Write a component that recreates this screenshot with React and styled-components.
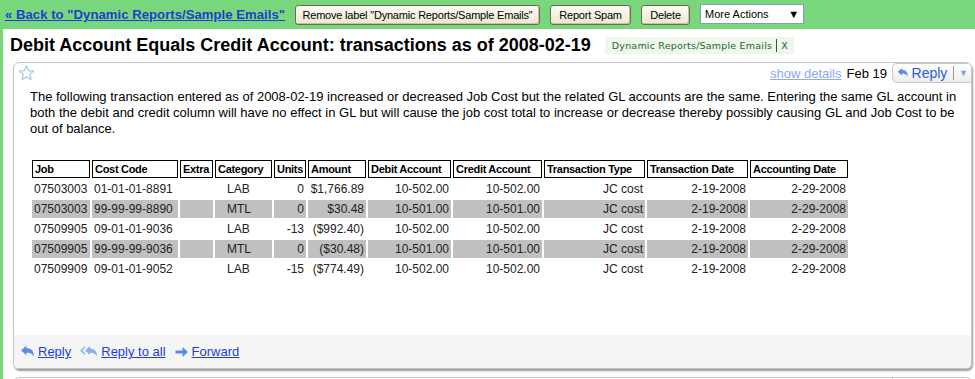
import React from 'react';
import styled, { createGlobalStyle } from 'styled-components';

const GlobalStyle = createGlobalStyle`
  html, body {
    margin: 0;
    padding: 0;
    background: #78d77d;
    font-family: 'Liberation Sans', Arial, sans-serif;
    overflow: hidden;
  }
`;

const Page = styled.div`
  width: 975px;
  height: 379px;
  display: flex;
  flex-direction: column;
`;

const TopBar = styled.div`
  display: flex;
  flex-direction: row;
  align-items: center;
  height: 29px;
  padding: 0 5px;
  gap: 10px;
  flex-shrink: 0;
`;

const BackLink = styled.a`
  font-size: 13.2px;
  font-weight: bold;
  color: #1f3fd0;
  text-decoration: underline;
`;

const ActionBtn = styled.button`
  font-family: 'Liberation Sans', Arial, sans-serif;
  font-size: 11px;
  letter-spacing: -0.2px;
  color: #000;
  width: ${(p) => p.$w}px;
  height: 20px;
  padding: 0;
  border: 1px solid #6f6b4c;
  border-radius: 3px;
  background: linear-gradient(#fdfcf6, #ece7cf);
  box-shadow: inset -1px -1px 0 #c9c19b;
`;

const FakeSelect = styled.div`
  display: flex;
  flex-direction: row;
  align-items: center;
  justify-content: space-between;
  width: 104px;
  height: 20px;
  box-sizing: border-box;
  padding: 0 4px;
  background: #fff;
  border: 1px solid #7f9db9;
  font-size: 11px;
  margin-top: -1px;
`;

const Panel = styled.div`
  flex: 1;
  background: #fff;
  margin-left: 3px;
  display: flex;
  flex-direction: column;
`;

const TitleRow = styled.div`
  display: flex;
  flex-direction: row;
  align-items: center;
  height: 33px;
  padding-left: 7px;
  gap: 10px;
`;

const Title = styled.h1`
  margin: 0;
  font-size: 18px;
  font-weight: bold;
  color: #000;
`;

const LabelChip = styled.span`
  font-family: 'DejaVu Sans', Verdana, sans-serif;
  font-size: 9.5px;
  color: #1d6a26;
  background: #eef6ee;
  height: 17px;
  padding: 0 6px 0 7px;
  letter-spacing: 0.2px;
  display: flex;
  align-items: center;
  gap: 4px;
  margin-left: 4px;
`;

const ChipSep = styled.span`
  display: inline-block;
  width: 1px;
  height: 13px;
  background: #1d6a26;
`;

const Card = styled.div`
  margin: 0 3px 0 10px;
  border: 1px solid #c6c6c6;
  border-radius: 6px;
  box-shadow: 1px 2px 2px #9a9a9a;
  display: flex;
  flex-direction: column;
  overflow: hidden;
  flex-shrink: 0;
`;

const CardHead = styled.div`
  display: flex;
  flex-direction: row;
  align-items: center;
  height: 20px;
  padding-left: 4px;
`;

const HeadRight = styled.div`
  margin-left: auto;
  display: flex;
  flex-direction: row;
  align-items: center;
  gap: 5px;
  font-size: 13px;
`;

const DetailsLink = styled.a`
  color: #8fa6f0;
  text-decoration: underline;
`;

const ReplyBtn = styled.div`
  display: flex;
  flex-direction: row;
  align-items: center;
  width: 79px;
  height: 20px;
  box-sizing: border-box;
  border: 1px solid #c9c9c9;
  border-right: none;
  border-radius: 5px 0 0 5px;
  background: linear-gradient(#fff, #ececec);
  padding: 0 3px 0 4px;
  color: #2a5bd6;
  font-size: 14px;
  gap: 3px;
`;

const BtnSep = styled.span`
  width: 1px;
  height: 14px;
  background: #999;
  margin: 0 2px 0 3px;
`;

const DropArrow = styled.span`
  font-size: 9px;
  color: #7d9ee6;
`;

const Body = styled.div`
  padding: 6px 10px 0 16px;
  height: 246px;
`;

const Para = styled.p`
  margin: 0;
  font-size: 13px;
  line-height: 16px;
  color: #000;
  width: 940px;
`;

const Table = styled.table`
  margin-top: 21px;
  border-collapse: separate;
  border-spacing: 2px;
  font-size: 12px;
  table-layout: fixed;
`;

const Th = styled.th`
  box-sizing: border-box;
  border: 1px solid #000;
  height: 18px;
  padding: 0 2px;
  font-size: 11px;
  letter-spacing: -0.3px;
  font-weight: bold;
  text-align: left;
  white-space: nowrap;
`;

const Td = styled.td`
  height: 18px;
  padding: 0 2px;
  white-space: nowrap;
  text-align: ${(p) => p.$align || 'left'};
  padding-left: ${(p) => (p.$indent ? '12px' : '2px')};
  background: ${(p) => (p.$shade ? '#c0c0c0' : 'transparent')};
  color: #222;
`;

const Footer = styled.div`
  background: #f5f5f5;
  height: 33px;
  display: flex;
  flex-direction: row;
  align-items: center;
  padding-left: 6px;
  gap: 8px;
  font-size: 13px;
`;

const FootLink = styled.a`
  display: flex;
  flex-direction: row;
  align-items: center;
  gap: 3px;
  color: #1f3fd0;
  text-decoration: underline;
`;

const NextCard = styled.div`
  margin: 8px 3px 0 10px;
  height: 20px;
  border: 1px solid #c6c6c6;
  border-bottom: none;
  border-radius: 6px 6px 0 0;
  display: flex;
  flex-direction: row;
  justify-content: flex-end;
  flex-shrink: 0;
`;

const NextDivider = styled.div`
  width: 78px;
  border-left: 1px solid #c6c6c6;
`;

const Star = () => (
  <svg width="17" height="16" viewBox="0 0 17 16">
    <path
      d="M8.5 1 L10.6 5.6 L15.6 6.1 L11.8 9.4 L12.9 14.5 L8.5 11.9 L4.1 14.5 L5.2 9.4 L1.4 6.1 L6.4 5.6 Z"
      fill="#fff"
      stroke="#a9c4ee"
      strokeWidth="1.2"
      strokeLinejoin="round"
    />
  </svg>
);

const ReplyIcon = ({ color = '#5b8be6' }) => (
  <svg width="15" height="14" viewBox="0 0 14 13">
    <path d="M1 5 L6 0.5 L6 3 C10 3 13 5 13 11 C11.5 8 9.5 7.2 6 7.2 L6 9.5 Z" fill={color} />
  </svg>
);

const ReplyAllIcon = () => (
  <svg width="19" height="14" viewBox="0 0 19 13">
    <path d="M1 5 L6 0.5 L6 2.3 L3.2 5 L6 7.7 L6 9.5 Z" fill="#8fb0ee" />
    <path d="M6 5 L11 0.5 L11 3 C15 3 18 5 18 11 C16.5 8 14.5 7.2 11 7.2 L11 9.5 Z" fill="#8fb0ee" />
  </svg>
);

const ForwardIcon = () => (
  <svg width="15" height="12" viewBox="0 0 14 12">
    <path d="M1 4.5 L8 4.5 L8 1 L13.5 6 L8 11 L8 7.5 L1 7.5 Z" fill="#5b8be6" />
  </svg>
);

const columns = [
  { name: 'Job', w: 58 },
  { name: 'Cost Code', w: 86 },
  { name: 'Extra', w: 33 },
  { name: 'Category', w: 57 },
  { name: 'Units', w: 31 },
  { name: 'Amount', w: 58 },
  { name: 'Debit Account', w: 83 },
  { name: 'Credit Account', w: 89 },
  { name: 'Transaction Type', w: 101 },
  { name: 'Transaction Date', w: 101 },
  { name: 'Accounting Date', w: 98 },
];

const rows = [
  ['07503003', '01-01-01-8891', '', 'LAB', '0', '$1,766.89', '10-502.00', '10-502.00'],
  ['07503003', '99-99-99-8890', '', 'MTL', '0', '$30.48', '10-501.00', '10-501.00'],
  ['07509905', '09-01-01-9036', '', 'LAB', '-13', '($992.40)', '10-502.00', '10-502.00'],
  ['07509905', '99-99-99-9036', '', 'MTL', '0', '($30.48)', '10-501.00', '10-501.00'],
  ['07509909', '09-01-01-9052', '', 'LAB', '-15', '($774.49)', '10-502.00', '10-502.00'],
];

export default function App() {
  return (
    <Page>
      <GlobalStyle />
      <TopBar>
        <BackLink href="#">« Back to "Dynamic Reports/Sample Emails"</BackLink>
        <ActionBtn $w={245}>Remove label "Dynamic Reports/Sample Emails"</ActionBtn>
        <ActionBtn $w={81}>Report Spam</ActionBtn>
        <ActionBtn $w={49}>Delete</ActionBtn>
        <FakeSelect>
          <span>More Actions</span>
          <span>▼</span>
        </FakeSelect>
      </TopBar>
      <Panel>
        <TitleRow>
          <Title>Debit Account Equals Credit Account: transactions as of 2008-02-19</Title>
          <LabelChip>
            Dynamic Reports/Sample Emails <ChipSep /> X
          </LabelChip>
        </TitleRow>
        <Card>
          <CardHead>
            <Star />
            <HeadRight>
              <DetailsLink href="#">show details</DetailsLink>
              <span>Feb 19</span>
              <ReplyBtn>
                <ReplyIcon />
                <span>Reply</span>
                <BtnSep />
                <DropArrow>▼</DropArrow>
              </ReplyBtn>
            </HeadRight>
          </CardHead>
          <Body>
            <Para>
              The following transaction entered as of 2008-02-19 increased or decreased Job Cost but the
              related GL accounts are the same. Entering the same GL account in both the debit and credit
              column will have no effect in GL but will cause the job cost total to increase or decrease
              thereby possibly causing GL and Job Cost to be out of balance.
            </Para>
            <Table>
              <thead>
                <tr>
                  {columns.map((c) => (
                    <Th key={c.name} style={{ width: c.w }}>
                      {c.name}
                    </Th>
                  ))}
                </tr>
              </thead>
              <tbody>
                {rows.map((r, i) => {
                  const shade = i % 2 === 1;
                  return (
                    <tr key={i}>
                      <Td $shade={shade}>{r[0]}</Td>
                      <Td $shade={shade}>{r[1]}</Td>
                      <Td $shade={shade}>{r[2]}</Td>
                      <Td $shade={shade} $indent>{r[3]}</Td>
                      <Td $shade={shade} $align="right">{r[4]}</Td>
                      <Td $shade={shade} $align="right">{r[5]}</Td>
                      <Td $shade={shade} $align="right">{r[6]}</Td>
                      <Td $shade={shade} $align="right">{r[7]}</Td>
                      <Td $shade={shade} $align="right">JC cost</Td>
                      <Td $shade={shade} $align="right">2-19-2008</Td>
                      <Td $shade={shade} $align="right">2-29-2008</Td>
                    </tr>
                  );
                })}
              </tbody>
            </Table>
          </Body>
          <Footer>
            <FootLink href="#">
              <ReplyIcon />
              Reply
            </FootLink>
            <FootLink href="#">
              <ReplyAllIcon />
              Reply to all
            </FootLink>
            <FootLink href="#">
              <ForwardIcon />
              Forward
            </FootLink>
          </Footer>
        </Card>
        <NextCard>
          <NextDivider />
        </NextCard>
      </Panel>
    </Page>
  );
}
